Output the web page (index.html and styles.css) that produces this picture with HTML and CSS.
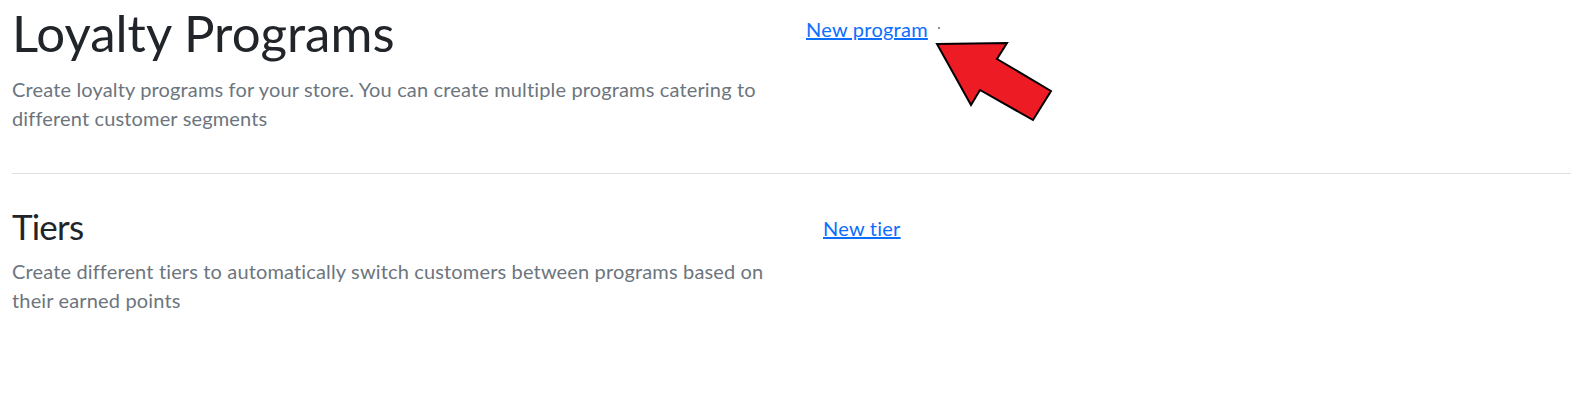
FILE: index.html
```html
<!DOCTYPE html>
<html lang="en">
<head>
<meta charset="utf-8">
<title>Loyalty Programs</title>
<link rel="stylesheet" href="styles.css">
</head>
<body>
<main class="page">
  <section class="setting setting--primary">
    <div class="setting-info">
      <h1 class="setting-title">Loyalty Programs</h1>
      <p class="setting-desc">Create loyalty programs for your store. You can create multiple programs catering to different customer segments</p>
    </div>
    <div class="setting-action">
      <a href="#" class="action-link">New program</a>
      <span class="sep-dot"></span>
    </div>
  </section>
  <hr class="divider">
  <section class="setting setting--secondary">
    <div class="setting-info">
      <h2 class="setting-title">Tiers</h2>
      <p class="setting-desc">Create different tiers to automatically switch customers between programs based on their earned points</p>
    </div>
    <div class="setting-action">
      <a href="#" class="action-link">New tier</a>
    </div>
  </section>
  <svg class="callout-arrow" width="130" height="90" viewBox="0 0 130 90" aria-hidden="true">
    <polygon points="7,6 77,5 67,21 121,53 103,82 50,52 41,67" fill="#ed1c24" stroke="#000" stroke-width="2" stroke-linejoin="miter"/>
  </svg>
</main>
</body>
</html>
```

FILE: styles.css
```css
* { box-sizing: border-box; }
html, body { margin: 0; padding: 0; background: #fff; }
body {
  font-family: Lato, "Open Sans", "Liberation Sans", sans-serif;
  color: #212529;
}
.page {
  position: relative;
  padding: 2px 0 0 12px;
  min-height: 400px;
}
.setting {
  display: grid;
  grid-template-columns: 770px 1fr;
  column-gap: 24px;
}
.setting-title {
  margin: 0;
  color: #212529;
  font-weight: 400;
}
.setting--primary .setting-title {
  font-size: 51px;
  line-height: 62px;
}
.setting--secondary .setting-title {
  font-size: 35px;
  line-height: 43px;
  letter-spacing: -0.8px;
}
.setting-desc {
  margin: 0;
  font-size: 20px;
  line-height: 29px;
  letter-spacing: 0.15px;
  color: #6c757d;
}
.setting--primary .setting-desc { margin-top: 11px; }
.setting--secondary .setting-desc { margin-top: 9px; }
.setting-action {
  display: flex;
  align-items: center;
  align-self: start;
}
.setting--primary .setting-action { padding-top: 12px; }
.setting--secondary .setting-action { padding-top: 8px; padding-left: 17px; }
.action-link {
  font-size: 20px;
  line-height: 30px;
  letter-spacing: 0.25px;
  color: #0d6efd;
  text-decoration: underline;
}
.sep-dot {
  width: 2px;
  height: 2px;
  margin-left: 10px;
  margin-top: -2px;
  background: #8a8f94;
}
.divider {
  margin: 40px 7px 31px 0;
  border: 0;
  border-top: 1px solid #dfe0e1;
  height: 0;
}
.callout-arrow {
  position: absolute;
  left: 930px;
  top: 38px;
}
```
